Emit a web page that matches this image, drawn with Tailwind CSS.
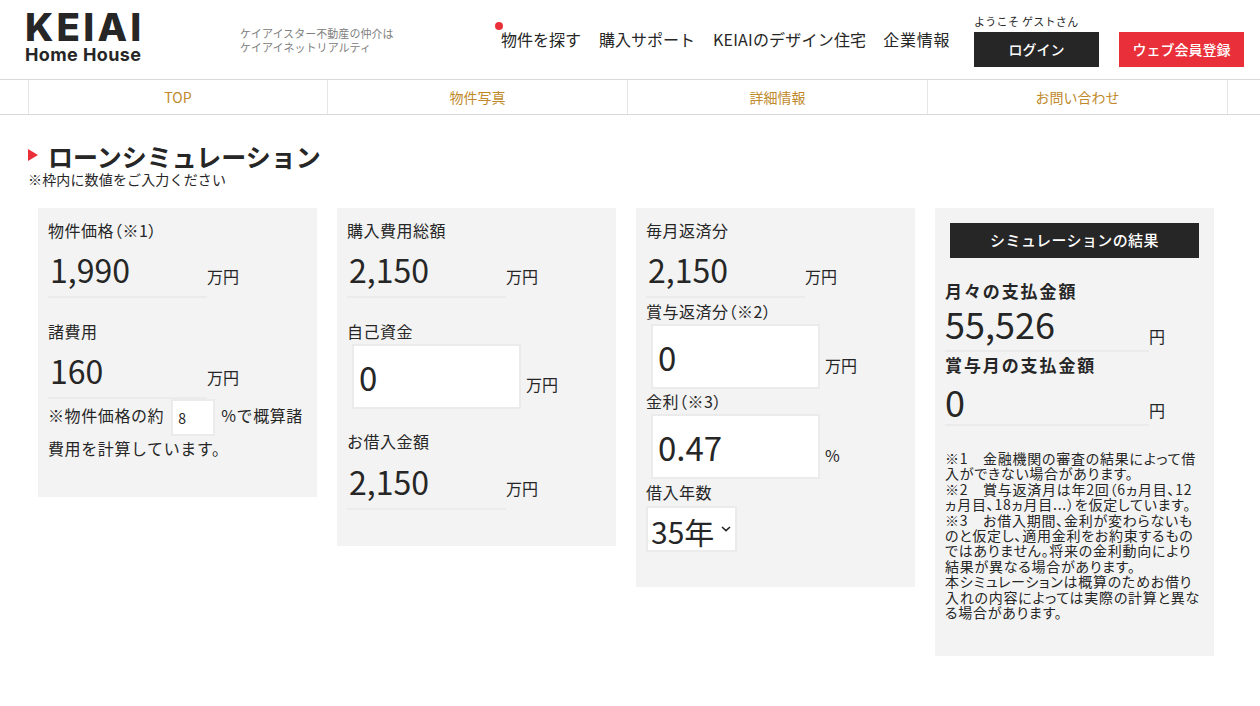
<!DOCTYPE html>
<html lang="ja">
<head>
  <meta charset="UTF-8" />
  <meta name="viewport" content="width=device-width, initial-scale=1.0" />
  <title>ローンシミュレーション - KEIAI Home House</title>
  <script src="https://cdn.jsdelivr.net/npm/@tailwindcss/browser@4"></script>
</head>
<body class="bg-white text-[#262626] font-['Noto_Sans_CJK_JP','Noto_Sans',sans-serif] h-[706px] overflow-hidden">
  <!-- ヘッダー -->
  <header class="h-[80px] border-b border-[#d9d9d9] flex">
    <a class="w-[240px] pl-[25px] pt-[10px] block font-['Inter',sans-serif] text-[#262626]">
      <div class="text-[38.5px] leading-[32px] h-[32px] font-extrabold tracking-[3.2px] mt-[1px]">KEIAI</div>
      <div class="text-[18px] leading-[18px] font-bold tracking-[0.4px] mt-[3px]">Home House</div>
    </a>
    <p class="w-[214px] pt-[26px] text-[11px] leading-[14px] tracking-[0.05px] text-[#808080]">ケイアイスター不動産の仲介は<br>ケイアイネットリアルティ</p>
    <nav class="relative w-[520px] flex gap-[17px] pt-[28px] pl-[47px] text-[16px] leading-[22px] whitespace-nowrap">
      <span class="absolute left-[41px] top-[22px] w-[8px] h-[8px] rounded-full bg-[#e9303a]"></span>
      <a class="mr-[1px]">物件を探す</a><a class="mr-[1px]">購入サポート</a><a class="tracking-[0.2px]">KEIAIのデザイン住宅</a><a class="tracking-[0.7px]">企業情報</a>
    </nav>
    <div class="pt-[13px]">
      <p class="text-[11px] leading-[16px] tracking-[0.3px] mb-[3px]">ようこそ ゲストさん</p>
      <div class="flex gap-[20px]">
        <a class="w-[125px] h-[35px] bg-[#262626] text-white text-[14px] font-medium flex items-center justify-center">ログイン</a>
        <a class="w-[125px] h-[35px] bg-[#e9303a] text-white text-[14px] font-medium flex items-center justify-center">ウェブ会員登録</a>
      </div>
    </div>
  </header>

  <!-- タブ -->
  <nav class="h-[35px] border-b border-[#d9d9d9] pl-[28px] flex text-[14px] text-[#c08a2c]">
    <a class="w-[299px] border-l border-[#e6e6e6] flex items-center justify-center">TOP</a>
    <a class="w-[300px] border-l border-[#e6e6e6] flex items-center justify-center">物件写真</a>
    <a class="w-[300px] border-l border-[#e6e6e6] flex items-center justify-center">詳細情報</a>
    <a class="w-[301px] border-x border-[#e6e6e6] flex items-center justify-center">お問い合わせ</a>
  </nav>

  <main class="pl-[28px] pt-[25px]">
    <div class="flex items-center h-[32px]">
      <span class="w-0 h-0 border-y-[6px] border-y-transparent border-l-[10px] border-l-[#e9303a] mr-[10px] -mt-[2px]"></span>
      <h1 class="text-[25px] font-bold leading-[32px]">ローンシミュレーション</h1>
    </div>
    <p class="text-[14px] leading-[16px] tracking-[0.15px] mb-[21px] -mt-[1px]">※枠内に数値をご入力ください</p>

    <div class="flex items-start gap-[20px] pl-[10px]">
      <!-- 物件価格 -->
      <section class="w-[279px] h-[289px] bg-[#f3f3f3] pl-[10px] pt-[12px]">
        <p class="text-[16px] leading-[20px] tracking-[0.5px] [font-feature-settings:'palt']">物件価格（※1）</p>
        <div class="flex items-end mt-[7px]">
          <div class="w-[159px] h-[51px] border-b-2 border-[#ebebeb] text-[32px] leading-[44px] pl-[2px]">1,990</div>
          <span class="text-[16px] leading-[22px] mb-[11px]">万円</span>
        </div>
        <p class="text-[16px] leading-[20px] mt-[23px] tracking-[0.5px]">諸費用</p>
        <div class="flex items-end mt-[7px]">
          <div class="w-[159px] h-[51px] border-b-2 border-[#ebebeb] text-[32px] leading-[44px] pl-[2px]">160</div>
          <span class="text-[16px] leading-[22px] mb-[11px]">万円</span>
        </div>
        <div class="text-[16px] leading-[24px] tracking-[0.6px] w-[262px]">
          ※物件価格の約<input value="8" class="w-[44px] h-[37px] ml-[7px] mr-[6px] px-[5px] bg-white border-2 border-[#ebebeb] text-[14px] align-middle outline-none" />%で概算諸費用を計算しています。
        </div>
      </section>

      <!-- 購入費用 -->
      <section class="w-[279px] h-[338px] bg-[#f3f3f3] pl-[10px] pt-[12px]">
        <p class="text-[16px] leading-[20px] tracking-[0.5px]">購入費用総額</p>
        <div class="flex items-end mt-[7px]">
          <div class="w-[159px] h-[51px] border-b-2 border-[#ebebeb] text-[32px] leading-[44px] pl-[2px]">2,150</div>
          <span class="text-[16px] leading-[22px] mb-[11px]">万円</span>
        </div>
        <p class="text-[16px] leading-[20px] mt-[23px] tracking-[0.5px]">自己資金</p>
        <div class="flex items-end mt-[3px] pl-[5px]">
          <input value="0" class="w-[169px] h-[65px] bg-white border-2 border-[#ebebeb] text-[33px] px-[5px] outline-none" />
          <span class="text-[16px] leading-[22px] ml-[5px] mb-[14px]">万円</span>
        </div>
        <p class="text-[16px] leading-[20px] mt-[22px] tracking-[0.5px]">お借入金額</p>
        <div class="flex items-end mt-[8px]">
          <div class="w-[159px] h-[51px] border-b-2 border-[#ebebeb] text-[32px] leading-[44px] pl-[2px]">2,150</div>
          <span class="text-[16px] leading-[22px] mb-[11px]">万円</span>
        </div>
      </section>

      <!-- 返済 -->
      <section class="w-[279px] h-[379px] bg-[#f3f3f3] pl-[10px] pt-[12px]">
        <p class="text-[16px] leading-[20px] tracking-[0.5px]">毎月返済分</p>
        <div class="flex items-end mt-[7px]">
          <div class="w-[159px] h-[51px] border-b-2 border-[#ebebeb] text-[32px] leading-[44px] pl-[2px]">2,150</div>
          <span class="text-[16px] leading-[22px] mb-[11px]">万円</span>
        </div>
        <p class="text-[16px] leading-[22px] mt-[2px] tracking-[0.5px] [font-feature-settings:'palt']">賞与返済分（※2）</p>
        <div class="flex items-end pl-[5px] mt-[2px]">
          <input value="0" class="w-[169px] h-[65px] bg-white border-2 border-[#ebebeb] text-[33px] px-[5px] outline-none" />
          <span class="text-[16px] leading-[22px] ml-[5px] mb-[13px]">万円</span>
        </div>
        <p class="text-[16px] leading-[22px] mt-[1px] tracking-[0.5px] [font-feature-settings:'palt']">金利（※3）</p>
        <div class="flex items-end pl-[5px] mt-[2px]">
          <input value="0.47" class="w-[169px] h-[65px] bg-white border-2 border-[#ebebeb] text-[33px] px-[5px] outline-none" />
          <span class="text-[16px] leading-[22px] ml-[5px] mb-[13px]">%</span>
        </div>
        <p class="text-[16px] leading-[22px] mt-[2px] tracking-[0.5px]">借入年数</p>
        <div class="relative w-[91px] h-[46px] mt-[3px] bg-white border-2 border-[#ebebeb] text-[30px] leading-[46px] pl-[3px]">
          35年
          <svg class="absolute right-[4px] top-[18px]" width="10" height="6" viewBox="0 0 10 6" fill="none" stroke="#262626" stroke-width="1.6"><path d="M1 1l4 3.6L9 1" /></svg>
        </div>
      </section>

      <!-- 結果 -->
      <section class="w-[279px] h-[448px] bg-[#f3f3f3] pl-[10px] pt-[15px]">
        <h2 class="w-[249px] h-[35px] ml-[5px] bg-[#262626] text-white text-[15px] font-medium tracking-[0.4px] flex items-center justify-center">シミュレーションの結果</h2>
        <p class="text-[17px] leading-[24px] font-bold tracking-[1.9px] mt-[21px]">月々の支払金額</p>
        <div class="flex items-end">
          <div class="w-[204px] h-[49px] border-b-2 border-[#ebebeb] text-[36px] leading-[40px]">55,526</div>
          <span class="text-[16px] leading-[22px] mb-[5px]">円</span>
        </div>
        <p class="text-[17px] leading-[24px] font-bold tracking-[1.9px] mt-[1px]">賞与月の支払金額</p>
        <div class="flex items-end">
          <div class="w-[204px] h-[49px] border-b-2 border-[#ebebeb] text-[36px] leading-[48px]">0</div>
          <span class="text-[16px] leading-[22px] mb-[5px]">円</span>
        </div>
        <p class="w-[258px] text-[14px] leading-[15.4px] mt-[25px] tracking-[0.75px] [font-feature-settings:'palt']">※1　金融機関の審査の結果によって借入ができない場合があります。<br>※2　賞与返済月は年2回（6ヵ月目、12ヵ月目、18ヵ月目...）を仮定しています。<br>※3　お借入期間、金利が変わらないものと仮定し、適用金利をお約束するものではありません。将来の金利動向により結果が異なる場合があります。<br>本シミュレーションは概算のためお借り入れの内容によっては実際の計算と異なる場合があります。</p>
      </section>
    </div>
  </main>
</body>
</html>
